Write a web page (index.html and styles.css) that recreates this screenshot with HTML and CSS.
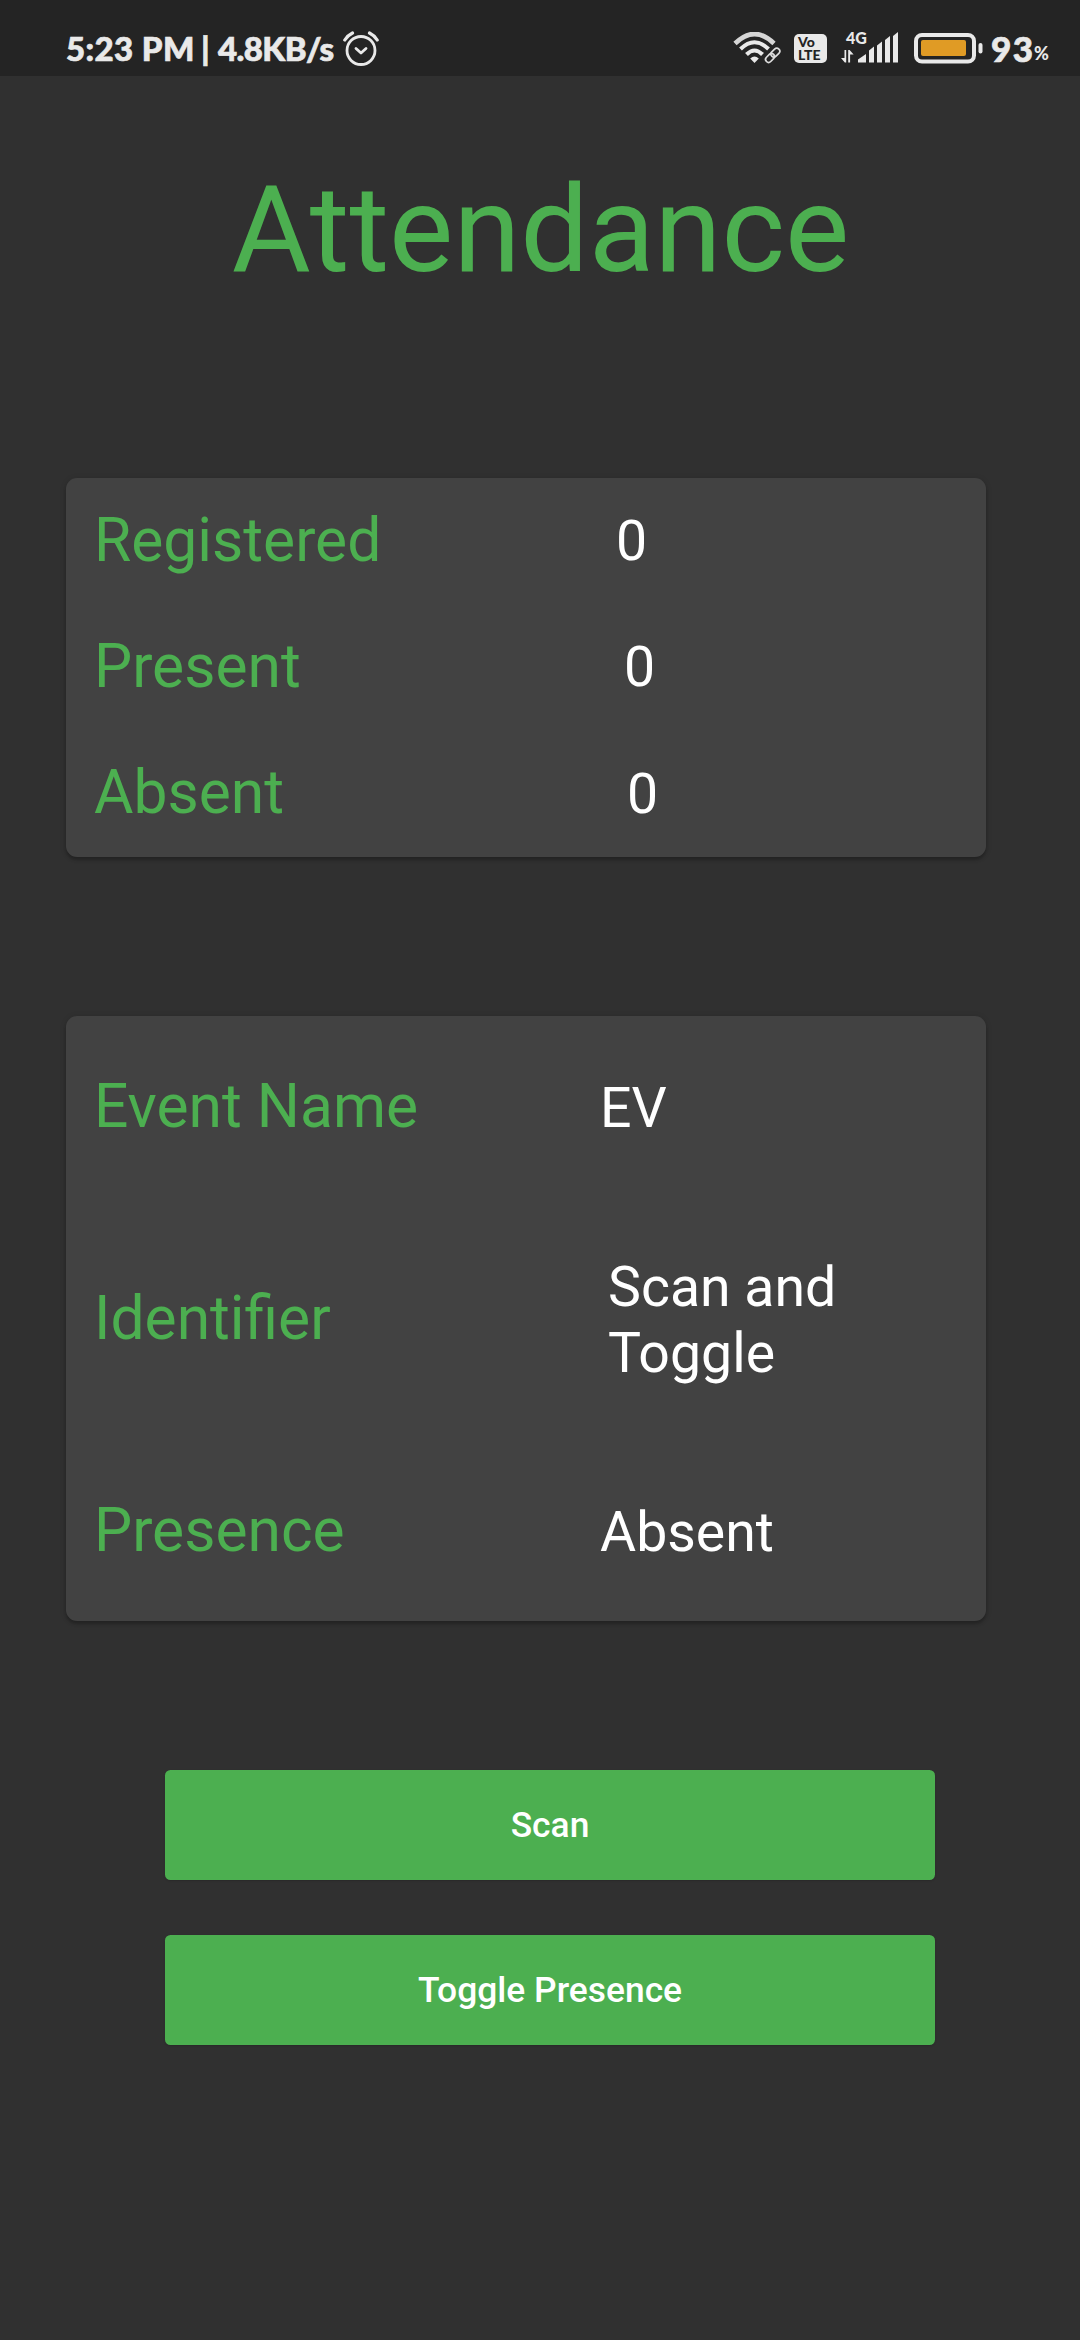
FILE: index.html
```html
<!DOCTYPE html>
<html lang="en">
<head>
<meta charset="utf-8">
<title>Attendance</title>
<link rel="stylesheet" href="styles.css">
</head>
<body>
<header class="status">
  <span class="clock">5:23 PM</span>
  <span class="divider">|</span>
  <span class="speed">4.8KB/s</span>
  <svg class="alarm" width="36" height="36" viewBox="0 0 36 36" fill="none" stroke="#e9e9e9" stroke-linecap="round" stroke-linejoin="round">
    <circle cx="18" cy="19.5" r="14" stroke-width="2.8"/>
    <path d="M13 17.5l5 4.5 5-4.500" stroke-width="2.8"/>
    <path d="M1.800 9Q4.500 4.500 9.500 2M34.200 9Q31.500 4.500 26.500 2" stroke-width="3.2"/>
  </svg>
  <svg class="wifi" width="48" height="33" viewBox="0 0 48 33" fill="none">
    <path d="M2 11.500Q21.500-7.500 41 11.500" stroke="#d6d6d6" stroke-width="4.600"/>
    <path d="M7.500 17Q21.500 3.500 35.500 17" stroke="#e9e9e9" stroke-width="4"/>
    <path d="M13.500 22.500Q21.500 14.500 29.500 22.500" stroke="#e9e9e9" stroke-width="4"/>
    <path d="M21.500 31l-4.300-4.500q4.300-4 8.600 0z" fill="#e9e9e9"/>
    <g stroke="#dcdcdc" stroke-width="1.700" transform="rotate(-45 39.500 23.500)">
      <rect x="31" y="20.500" width="10" height="6" rx="3"/>
      <rect x="38.500" y="20.500" width="10" height="6" rx="3"/>
    </g>
  </svg>
  <span class="volte"><span class="vo">Vo</span><span class="lte">LTE</span></span>
  <span class="mobile">
    <span class="net">4G</span>
    <svg width="57" height="32" viewBox="0 0 57 32" fill="#e9e9e9">
      <path d="M0 26h3.500V18h1.700v12.500H3.800zM7.200 18H8.600l4 4.500H9.100V30.500H7.200z"/>
      <path d="M17 30v-2.500L25 22v8.500H17zM28 18.500l5-4v16h-5zM36 13.500l5-4v21h-5zM44 8l5-4v26.500h-5zM52 4l5-4v30.500h-5z"/>
    </svg>
  </span>
  <svg class="battery" width="69" height="31" viewBox="0 0 69 31">
    <rect x="2" y="2" width="58" height="26.500" rx="6" fill="none" stroke="#e9e9e9" stroke-width="4"/>
    <rect x="7" y="7" width="45" height="16" rx="2" fill="#e09b25"/>
    <rect x="64.500" y="10" width="4" height="10.500" rx="2" fill="#e9e9e9"/>
  </svg>
  <span class="level">93</span><span class="percent">%</span>
</header>
<main class="page">
  <h1 class="title">Attendance</h1>
  <section class="card counts">
    <div class="row"><span class="label">Registered</span><span class="value registered">0</span></div>
    <div class="row"><span class="label">Present</span><span class="value present">0</span></div>
    <div class="row"><span class="label">Absent</span><span class="value absent">0</span></div>
  </section>
  <section class="card event">
    <div class="row"><span class="label">Event Name</span><span class="value">EV</span></div>
    <div class="row"><span class="label">Identifier</span><span class="value identifier">Scan and Toggle</span></div>
    <div class="row"><span class="label">Presence</span><span class="value">Absent</span></div>
  </section>
  <div class="actions">
    <button class="button">Scan</button>
    <button class="button">Toggle Presence</button>
  </div>
</main>
</body>
</html>
```
FILE: styles.css
```css
* { box-sizing: border-box; }
body {
  margin: 0;
  height: 2340px;
  background: #303030;
  color: #fff;
  font-family: Roboto, sans-serif;
  overflow: hidden;
}
.status {
  display: flex;
  align-items: flex-start;
  height: 76px;
  padding: 31px 30px 0 66px;
  background: #242424;
  color: #e9e9e9;
  font: 900 33px/34px Lato, sans-serif;
  white-space: nowrap;
}
.status > * { flex: none; }
.clock,
.divider,
.speed,
.level { -webkit-text-stroke: 0.7px #e9e9e9; }
.clock { width: 135px; letter-spacing: 0.4px; }
.divider { width: 17px; }
.speed { width: 125px; letter-spacing: -0.6px; }
.wifi { margin: 1px 0 0 354px; }
.volte {
  display: flex;
  flex-direction: column;
  width: 33px;
  height: 29px;
  margin: 3px 0 0 13px;
  border-radius: 5px;
  background: #e9e9e9;
  color: #242424;
  font: 900 14px/13px Lato, sans-serif;
  padding: 1px 0 0 4px;
}
.mobile { position: relative; width: 57px; margin: 1px 0 0 14px; }
.mobile svg { display: block; }
.net {
  position: absolute;
  left: 5px;
  top: -1px;
  font: 900 16px/14px Lato, sans-serif;
}
.battery { margin: 2px 0 0 16px; }
.level { width: 43px; margin-left: 8px; font-size: 35px; letter-spacing: 1.5px; }
.percent { font-size: 18px; line-height: 45px; }
.page { display: flex; flex-direction: column; padding: 0 94px 0 66px; }
.title {
  margin: 83px -29px 0 0;
  text-align: center;
  color: #4caf50;
  font-size: 121.2px;
  font-weight: 400;
  line-height: 142px;
}
.card {
  display: flex;
  flex-direction: column;
  padding-left: 28px;
  border-radius: 11px;
  background: #424242;
  box-shadow: 0 3px 3px rgba(0, 0, 0, 0.2), 0 1px 6px rgba(0, 0, 0, 0.14);
}
.counts { height: 379px; margin-top: 177px; }
.counts .row { flex: 1; }
.event {
  height: 605px;
  margin-top: 159px;
  padding-top: 56px;
  padding-bottom: 54px;
  justify-content: space-between;
}
.row { display: grid; grid-template-columns: 506px 1fr; align-items: center; }
.label { color: #4caf50; font-size: 60.5px; line-height: 69px; padding-bottom: 2px; }
.value { font-size: 55.4px; line-height: 66px; padding-top: 2px; }
.registered { padding-left: 16px; }
.present { padding-left: 24px; }
.absent { padding-left: 27px; }
.identifier { width: 270px; padding-left: 8px; }
.actions {
  display: flex;
  flex-direction: column;
  gap: 55px;
  width: 770px;
  margin: 149px 0 0 99px;
}
.button {
  height: 110px;
  border: 0;
  border-radius: 5.5px;
  background: #4caf50;
  color: #fff;
  font: 500 35.4px/42px Roboto, sans-serif;
  box-shadow: 0 1px 2px rgba(0, 0, 0, 0.15);
}
```
